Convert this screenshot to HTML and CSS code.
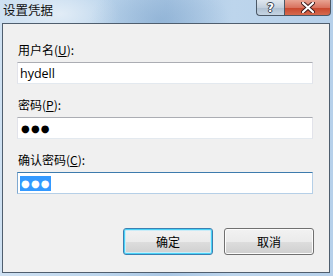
FILE: index.html
```html
<!DOCTYPE html>
<html lang="zh-CN">
<head>
  <meta charset="UTF-8">
  <title>设置凭据</title>
  <link rel="stylesheet" href="styles.css">
</head>
<body>
  <div class="window">
    <div class="titlebar">
      <span class="title">设置凭据</span>
      <div class="caption-buttons">
        <div class="cap-btn help">?</div>
        <div class="cap-btn close">
          <svg width="14" height="11" viewBox="0 0 14 11">
            <path d="M2 1 L12 10 M12 1 L2 10" stroke="#3a1a1a" stroke-width="4" stroke-linecap="round"/>
            <path d="M2 1 L12 10 M12 1 L2 10" stroke="#fff" stroke-width="2.2" stroke-linecap="round"/>
          </svg>
        </div>
      </div>
    </div>

    <div class="client">
      <div class="field">
        <label>用户名(<u>U</u>):</label>
        <div class="textbox"><span>hydell</span></div>
      </div>

      <div class="field">
        <label>密码(<u>P</u>):</label>
        <div class="textbox"><span class="dots">●●●</span></div>
      </div>

      <div class="field">
        <label>确认密码(<u>C</u>):</label>
        <div class="textbox focused"><span class="dots selected">●●●</span></div>
      </div>

      <div class="buttons">
        <button class="btn default">确定</button>
        <button class="btn">取消</button>
      </div>
    </div>
  </div>
</body>
</html>
```

FILE: styles.css
```css
* {
  box-sizing: border-box;
  margin: 0;
  padding: 0;
}

body {
  font-family: "Noto Sans CJK SC", "Noto Sans", sans-serif;
  font-size: 12px;
  color: #000;
}

.window {
  width: 333px;
  height: 276px;
  padding: 0 3px 3px 2px;
  display: flex;
  flex-direction: column;
  background:
    radial-gradient(ellipse 70px 40px at 160px 20px, rgba(120, 160, 200, 0.45), transparent),
    radial-gradient(ellipse 60px 30px at 60px 14px, rgba(255, 255, 255, 0.5), transparent),
    linear-gradient(90deg, #cfe1f2 0%, #bcd5ec 30%, #a9c6e3 50%, #bdd5ec 70%, #b6d0ea 100%);
}

.titlebar {
  height: 23px;
  display: flex;
  align-items: flex-start;
}

.title {
  padding: 2px 0 0 1px;
  line-height: 16px;
  font-size: 12.5px;
  color: #111;
}

.caption-buttons {
  margin-left: auto;
  display: flex;
  margin-right: -1px;
}

.cap-btn {
  height: 16px;
  border: 1px solid #4b5866;
  border-top: none;
  display: flex;
  align-items: center;
  justify-content: center;
}

.help {
  width: 28px;
  border-radius: 0 0 0 4px;
  border-right: none;
  background: linear-gradient(#dfe7ef, #c3d0dd 50%, #aebfd0 51%, #c5d4e3);
  color: #fff;
  font-family: "DejaVu Sans", sans-serif;
  font-weight: bold;
  font-size: 12px;
  text-shadow: 1px 0 #34414f, -1px 0 #34414f, 0 1px #34414f, 0 -1px #34414f;
}

.close {
  width: 47px;
  border-radius: 0 0 4px 0;
  background: linear-gradient(#e8a493, #d9735f 50%, #c8452b 51%, #d56a4f);
}

.client {
  flex: 1;
  background: #f0f0f0;
  border: 1px solid #4f5e6e;
  padding: 18px 16px 0 14px;
  display: flex;
  flex-direction: column;
  gap: 13px;
}

.field {
  display: flex;
  flex-direction: column;
  gap: 4px;
}

label {
  line-height: 16px;
  padding-left: 1px;
}

label u {
  text-underline-offset: 1px;
}

.textbox {
  height: 22px;
  background: #fff;
  border: 1px solid #e2e3ea;
  border-top-color: #abadb3;
  border-bottom-color: #e3e9ef;
  padding-left: 2px;
  display: flex;
  align-items: center;
  font-family: "Open Sans", "Noto Sans", sans-serif;
  font-size: 12.5px;
}

.textbox.focused {
  border-color: #b5cfe7;
  border-top-color: #3d7bad;
  border-left-color: #7ea9d1;
}

.dots {
  font-family: "DejaVu Sans", sans-serif;
  font-size: 10px;
  letter-spacing: 1.2px;
  line-height: 15px;
  padding: 0 0 0 1px;
}

.selected {
  background: #3399ff;
  color: #fff;
}

.buttons {
  margin-top: 21px;
  display: flex;
  justify-content: flex-end;
  gap: 11px;
  margin-right: -1px;
}

.btn {
  width: 90px;
  height: 27px;
  font-family: inherit;
  font-size: 12px;
  color: #000;
  border: 1px solid #707070;
  border-radius: 3px;
  background: linear-gradient(#f2f2f2, #ebebeb 50%, #dddddd 51%, #cfcfcf);
  box-shadow: inset 0 0 0 1px #fcfcfc;
}

.btn.default {
  border-color: #3c7fb1;
  box-shadow: inset 0 0 0 1px #48d2f7, inset 0 0 0 2px #c9ecf8;
}
```
